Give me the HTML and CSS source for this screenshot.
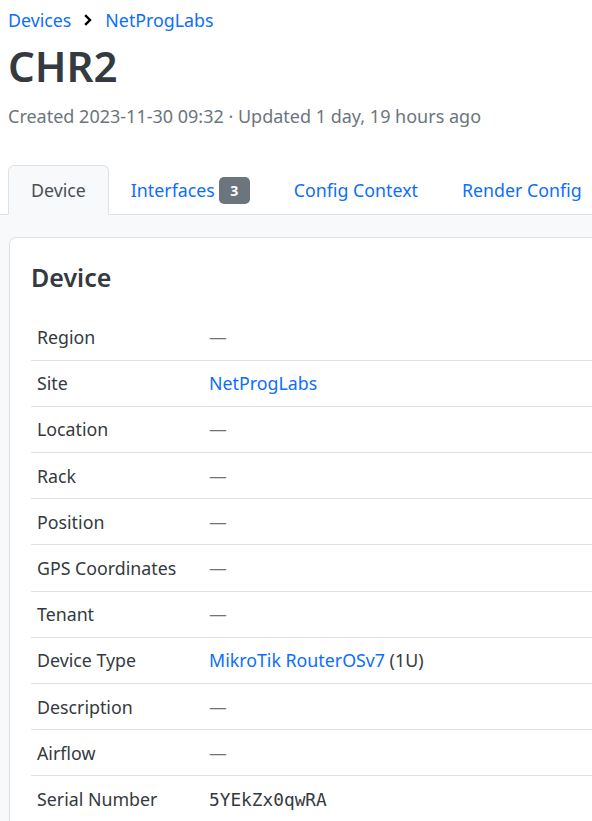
FILE: index.html
```html
<!DOCTYPE html>
<html>
<head>
<meta charset="utf-8">
<link rel="stylesheet" href="styles.css">
</head>
<body>
<div class="page">
  <header class="page-header">
    <nav class="breadcrumb">
      <a href="#">Devices</a>
      <svg class="chev" viewBox="0 0 10 12" width="10" height="12"><path d="M3 2 L7 6 L3 10" fill="none" stroke="#000" stroke-width="2.4" stroke-linecap="square" stroke-linejoin="miter"/></svg>
      <a href="#">NetProgLabs</a>
    </nav>
    <h1 class="title">CHR2</h1>
    <p class="meta">Created 2023-11-30 09:32 · Updated 1 day, 19 hours ago</p>
  </header>
  <ul class="tabs">
    <li class="tab active">Device</li>
    <li class="tab"><a href="#">Interfaces</a><span class="badge">3</span></li>
    <li class="tab"><a href="#">Config Context</a></li>
    <li class="tab"><a href="#">Render Config</a></li>
  </ul>
</div>
<div class="content">
  <div class="card">
    <h2 class="card-title">Device</h2>
    <table class="attrs">
      <tr><th>Region</th><td><span class="empty">—</span></td></tr>
      <tr><th>Site</th><td><a href="#">NetProgLabs</a></td></tr>
      <tr><th>Location</th><td><span class="empty">—</span></td></tr>
      <tr><th>Rack</th><td><span class="empty">—</span></td></tr>
      <tr><th>Position</th><td><span class="empty">—</span></td></tr>
      <tr><th>GPS Coordinates</th><td><span class="empty">—</span></td></tr>
      <tr><th>Tenant</th><td><span class="empty">—</span></td></tr>
      <tr><th>Device Type</th><td><a href="#">MikroTik RouterOSv7</a> (1U)</td></tr>
      <tr><th>Description</th><td><span class="empty">—</span></td></tr>
      <tr><th>Airflow</th><td><span class="empty">—</span></td></tr>
      <tr><th>Serial Number</th><td class="mono">5YEkZx0qwRA</td></tr>
    </table>
  </div>
</div>
</body>
</html>
```

FILE: styles.css
```css
* { box-sizing: border-box; }
html, body { margin: 0; padding: 0; }
body {
  font-family: "Noto Sans", "Open Sans", sans-serif;
  font-size: 18px;
  color: #343a40;
  background: #fff;
  width: 720px;
}
a { color: #0d6efd; text-decoration: none; }
.page { padding: 0 0 0 8px; }
.page-header { padding-top: 8px; }
.breadcrumb {
  display: flex;
  align-items: center;
  gap: 12px;
  font-size: 17.8px;
  line-height: 24px;
  height: 24px;
}
.chev { display: block; }
.title {
  margin: 10px 0 0 0;
  font-size: 42px;
  font-weight: 600;
  line-height: 48px;
  color: #343a40;
}
.meta {
  margin: 14px 0 0 0;
  font-size: 18px;
  line-height: 24px;
  color: #6c757d;
}
.tabs {
  list-style: none;
  margin: 37px 0 0 -8px;
  padding: 0 0 0 8px;
  display: flex;
  border-bottom: 1px solid #dee2e6;
  height: 50px;
}
.tab {
  display: flex;
  align-items: center;
  padding: 0 21px;
  font-size: 17.8px;
  height: 50px;
  border: 1px solid transparent;
  border-top-left-radius: 6px;
  border-top-right-radius: 6px;
  margin-bottom: -1px;
  white-space: nowrap;
}
.tab.active {
  background: #f8f9fa;
  border-color: #dee2e6 #dee2e6 #f8f9fa;
  color: #495057;
  padding: 0 22px;
}
.badge {
  display: inline-flex;
  align-items: center;
  justify-content: center;
  margin-left: 4px;
  width: 31px;
  height: 27px;
  background: #6c757d;
  color: #fff;
  font-size: 14px;
  font-weight: 700;
  border-radius: 5px;
}
.content {
  background: #f8f9fa;
  padding: 22px 0 0 9px;
}
.card {
  background: #fff;
  border: 1px solid #dee2e6;
  border-right: none;
  border-top-left-radius: 7px;
  padding: 20px 0 0 21px;
}
.card-title {
  margin: 0;
  font-size: 25px;
  font-weight: 600;
  line-height: 38px;
  color: #343a40;
}
.attrs {
  width: 100%;
  border-collapse: collapse;
  margin-top: 18px;
}
.attrs th, .attrs td {
  text-align: left;
  font-weight: 400;
  font-size: 17.8px;
  height: 46.2px;
  padding: 0 6px;
  border-bottom: 1px solid #dee2e6;
  vertical-align: middle;
}
.attrs th { width: 172px; color: #343a40; }
.attrs td { color: #343a40; }
.attrs tr:last-child th, .attrs tr:last-child td { border-bottom: none; }
.empty { color: #6c757d; }
.mono { font-family: "DejaVu Sans Mono", "Liberation Mono", monospace; font-size: 16.8px; }
```
